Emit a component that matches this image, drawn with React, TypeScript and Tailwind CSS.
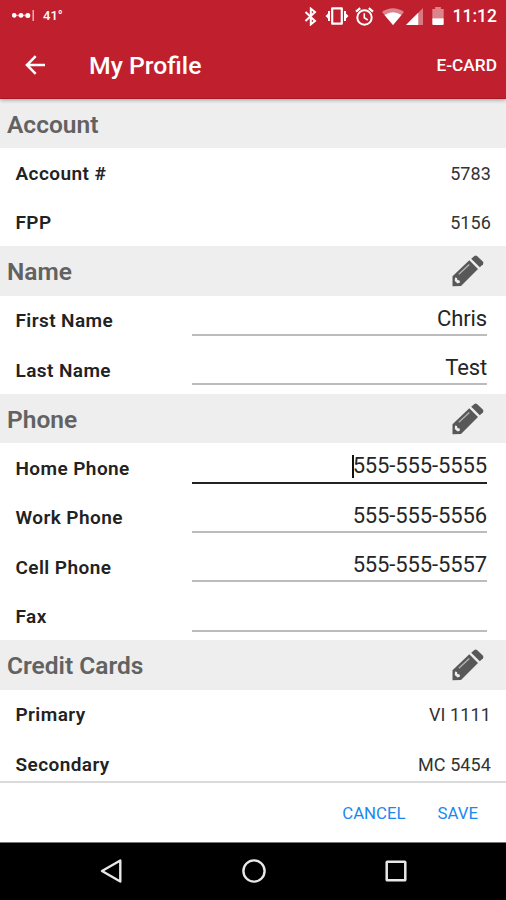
import React from "react";

function Pencil() {
  return (
    <svg className="mr-[22px] h-8 w-8" viewBox="0 0 32 32" fill="#585858">
      <path d="M.5 21.3 L17.3 5.3 L26 14 L9 31 L.5 31.3 Z" />
      <path d="M19.2 3.7 L22.4 .9 Q23.6 0 25 1 L30.8 6.6 Q31.9 7.8 31 9.2 L27.8 12.3 Z" />
      <path d="M6.8 19.2 L17.3 9.4" stroke="#b5b5b5" strokeWidth="1.3" fill="none" />
      <path d="M3 22.6 L5 23 L5.4 25 L7.6 25.5 L8 27.6 L5.6 28.6 L2.8 26 Z" fill="#eeeeee" />
    </svg>
  );
}

function Section({ title, editable = true }: { title: string; editable?: boolean }) {
  return (
    <div className="flex h-[49.25px] items-center justify-between bg-[#eeeeee] pl-[7px]">
      <h2 className="pt-[3px] text-[24.5px] leading-[30px] font-semibold text-[#626262]">{title}</h2>
      {editable && <Pencil />}
    </div>
  );
}

function Label({ children }: { children: React.ReactNode }) {
  return (
    <span className="pt-[2.6px] text-[19px] leading-6 font-semibold tracking-[0.42px] text-[#222222]">{children}</span>
  );
}

function InfoRow({ label, value }: { label: string; value: string }) {
  return (
    <div className="flex h-[49.25px] items-center justify-between pr-[15px] pl-[15.5px]">
      <Label>{label}</Label>
      <span className="pt-[2.6px] text-[18px] leading-6 tracking-[0.1px] text-[#333333]">{value}</span>
    </div>
  );
}

function FieldRow({ label, value, active = false }: { label: string; value: string; active?: boolean }) {
  return (
    <div className="flex h-[49.25px] items-start justify-between pr-[19px] pl-[15.5px]">
      <div className="flex h-full items-center">
        <Label>{label}</Label>
      </div>
      <div
        className={
          active
            ? "flex h-[40.7px] w-[295px] justify-end border-b-2 border-[#222222]"
            : "flex h-[40.7px] w-[295px] justify-end border-b-2 border-[#bcbcbc]"
        }
      >
        {active && <span className="mt-[12px] -mr-px h-[23px] w-[2px] bg-[#111111]" />}
        <span className="pt-[9px] text-[22px] leading-[28px] tracking-[-0.12px] text-[#252525]">{value}</span>
      </div>
    </div>
  );
}

function StatusBar() {
  return (
    <div className="flex h-8 items-center justify-between pr-[9px] pl-3 text-white">
      <div className="flex items-center">
        <svg className="h-3 w-[23px]" viewBox="0 0 23 12" fill="#fff">
          <circle cx="2.2" cy="5.4" r="2.3" />
          <circle cx="9" cy="5.4" r="2.4" />
          <circle cx="15.8" cy="5.4" r="2.5" />
          <path d="M2 5.4H17" stroke="#fff" strokeOpacity=".5" strokeWidth="1.5" />
          <path d="M21.2 0V11" stroke="#fff" strokeOpacity=".75" strokeWidth="1.3" />
        </svg>
        <span className="ml-2 text-[13px] leading-4 font-medium">41°</span>
      </div>
      <div className="flex items-center">
        <svg className="h-[19px] w-[14px]" viewBox="0 0 14 19" fill="none" stroke="#fff" strokeWidth="2">
          <path d="M1.5 5L11 14L6.8 17.4V1.6L11 5L1.5 14" />
        </svg>
        <svg className="ml-[7px] h-[18px] w-[24px]" viewBox="0 0 24 18" fill="#fff">
          <path d="M7.2 1.3H16.8V16.7H7.2Z" fill="none" stroke="#fff" strokeWidth="2.2" strokeLinejoin="round" />
          <path d="M5 4V14H3V11.5L.5 9L3 6.5V4ZM19 4V14H21V11.5L23.5 9L21 6.5V4Z" />
        </svg>
        <svg className="ml-[6px] h-[19px] w-[19px]" viewBox="0 0 19 19" fill="none" stroke="#fff" strokeWidth="2">
          <circle cx="9.5" cy="10.5" r="7.2" />
          <path d="M1 4.6L5.2 1.1M18 4.6L13.8 1.1" strokeWidth="2.2" />
          <path d="M9.3 6.3V10.8L12.8 13" strokeWidth="1.6" />
        </svg>
        <svg className="ml-[8px] h-[17px] w-[22px]" viewBox="0 0 22 17" fill="#fff">
          <path d="M0 4Q11 -3.5 22 4L11 17Z" opacity=".45" />
          <path d="M2.5 7Q11 1.5 19.5 7L11 17Z" />
        </svg>
        <svg className="ml-[2px] h-[17px] w-[17px]" viewBox="0 0 18 18" fill="#fff">
          <path d="M0 18L18 0V18Z" opacity=".4" />
          <path d="M0 18L13 5V18Z" />
        </svg>
        <svg className="ml-[9px] h-[18px] w-[12px]" viewBox="0 0 12 19" fill="#fff">
          <path d="M0 2H3V0H9V2H12V12H0Z" opacity=".45" />
          <path d="M0 12H12V18Q12 19 11 19H1Q0 19 0 18Z" />
        </svg>
        <span className="ml-[9px] text-[17.5px] leading-6 font-medium">11:12</span>
      </div>
    </div>
  );
}

export default function App() {
  return (
    <main className="flex h-[900px] w-[506px] flex-col overflow-hidden bg-white font-['Roboto',sans-serif]">
      <header className="relative h-[98.5px] shrink-0 border-b border-[#a61822] bg-[#c01f2e] shadow-[0_1px_4px_rgba(0,0,0,0.35)]">
        <StatusBar />
        <div className="flex h-[66px] items-center pr-[9px] pl-[25px] text-white">
          <svg className="h-5 w-5" viewBox="0 0 20 20" fill="none" stroke="#fff" strokeWidth="2.5">
            <path d="M20 10H2.5M10.7 1.2L1.9 10L10.7 18.8" />
          </svg>
          <h1 className="ml-[44px] flex-1 pt-[2px] text-[24.8px] leading-8 font-medium">My Profile</h1>
          <span className="text-[17.3px] leading-6 font-medium">E-CARD</span>
        </div>
      </header>
      <div className="h-[682.5px] shrink-0 overflow-hidden">
        <Section title="Account" editable={false} />
        <InfoRow label="Account #" value="5783" />
        <InfoRow label="FPP" value="5156" />
        <Section title="Name" />
        <FieldRow label="First Name" value="Chris" />
        <FieldRow label="Last Name" value="Test" />
        <Section title="Phone" />
        <FieldRow label="Home Phone" value="555-555-5555" active />
        <FieldRow label="Work Phone" value="555-555-5556" />
        <FieldRow label="Cell Phone" value="555-555-5557" />
        <FieldRow label="Fax" value="" />
        <Section title="Credit Cards" />
        <InfoRow label="Primary" value="VI 1111" />
        <InfoRow label="Secondary" value="MC 5454" />
      </div>
      <footer className="flex h-[61px] shrink-0 items-center justify-end gap-[32px] border-t-2 border-[#dadada] pr-[28px] text-[16.8px] leading-6 text-[#1c88ee]">
        <button>CANCEL</button>
        <button>SAVE</button>
      </footer>
      <nav className="flex flex-1 items-center justify-between border-t border-[#777777] bg-black pr-[99px] pb-[2px] pl-[100px]">
        <svg className="h-6 w-[22px]" viewBox="0 0 22 24" fill="none" stroke="#e8e8e8" strokeWidth="2.4" strokeLinejoin="round">
          <path d="M20.3 1.5V22.5L2 12Z" />
        </svg>
        <svg className="h-6 w-6" viewBox="0 0 24 24" fill="none" stroke="#e8e8e8" strokeWidth="2.4">
          <circle cx="12" cy="12" r="10.6" />
        </svg>
        <svg className="h-[22px] w-[22px]" viewBox="0 0 22 22" fill="none" stroke="#e8e8e8" strokeWidth="2.5">
          <rect x="1.7" y="1.7" width="18.6" height="18.6" rx=".6" />
        </svg>
      </nav>
    </main>
  );
}
